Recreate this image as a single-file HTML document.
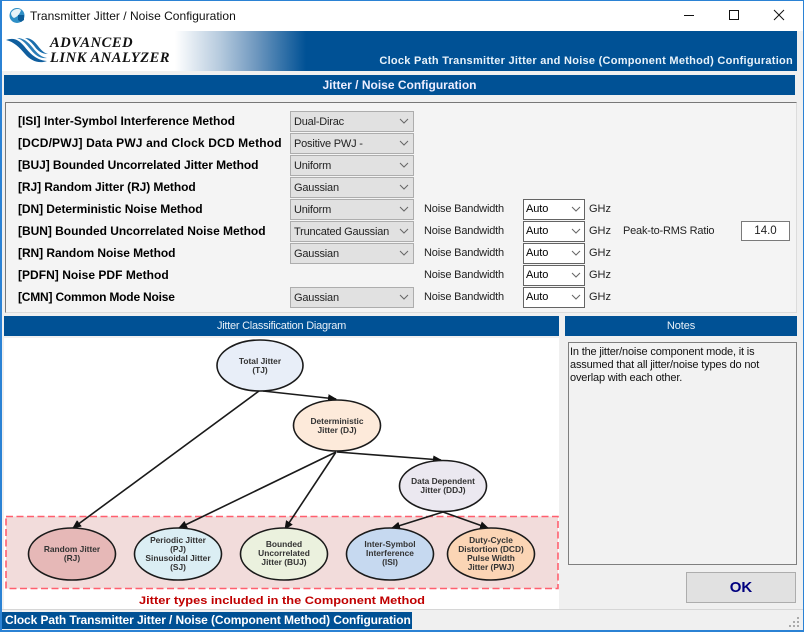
<!DOCTYPE html>
<html><head><meta charset="utf-8"><title>Transmitter Jitter / Noise Configuration</title>
<style>
html,body{margin:0;padding:0;width:804px;height:632px;overflow:hidden;background:#f0f0f0}
*{box-sizing:border-box}
#w{position:relative;width:804px;height:632px;background:#f0f0f0;font-family:"Liberation Sans",sans-serif;font-size:12px;color:#000;overflow:hidden}
#w div{position:absolute;white-space:nowrap}
.b{background:#005195}
.h{color:#fff;text-align:center;height:20px;line-height:21px}
.l{left:18px;font-weight:bold;font-size:12px;line-height:16px;height:16px}
.c{left:290px;width:124px;height:21px;background:#e1e1e1;border:1px solid #adadad;line-height:20px;padding-left:3px;font-size:11px;letter-spacing:-.2px;color:#222}
.a{left:523px;width:62px;height:21px;background:#fff;border:1px solid #646464;line-height:19px;padding-left:2px;font-size:11px;letter-spacing:-.1px}
.n{left:424px;font-size:11px;letter-spacing:-.17px;line-height:16px;color:#222}
.g{left:589px;font-size:11px;line-height:16px;color:#222}
</style></head><body><div id="w">
<div style="left:0;top:0;width:804px;height:31px;background:#fff"></div>
<svg style="position:absolute;left:9px;top:7px" width="17" height="17" viewBox="0 0 17 17"><circle cx="8" cy="8.5" r="7.5" fill="#2f8fc6"/><path d="M2 6C4 2 9 1 12 3C11 7 8 10 5 11C3 10 2 8 2 6Z" fill="#e8f3f8"/><path d="M9 8h6v5l-3 2-3-2z" fill="#0b5d99"/></svg>
<div style="left:30px;top:8px;font-size:12px;line-height:16px;color:#111;letter-spacing:.02px">Transmitter Jitter / Noise Configuration</div>
<svg style="position:absolute;left:680px;top:7px" width="110" height="18"><path d="M4 8.5H14" stroke="#111"/><path d="M49.5 3.5h9v9h-9z" fill="none" stroke="#111"/><path d="M94 3l10 10M104 3L94 13" stroke="#111" fill="none"/></svg>

<div style="left:2px;top:31px;width:795px;height:40px;background:linear-gradient(90deg,#fff 0,#fff 173px,#b4c9dd 219px,#6f98bf 254px,#005195 304px,#005195 100%)"></div>
<svg style="position:absolute;left:4px;top:36px" width="46" height="30" viewBox="0 0 46 30"><path d="M2 4C10 1 15 4 20 10C25 16 31 24 43 25C35 28 27 25 21 18C15 11 10 6 2 4Z" fill="#0f5e9e"/><path d="M13 2C20 2 24 6 29 12C33 17 37 21 43 22C36 23 31 19 27 14C22 8 19 4 13 2Z" fill="#2b7eb8"/><path d="M21 2C27 2 30 5 34 10C37 14 40 17 44 18C38 18 34 15 31 11C28 7 25 4 21 2Z" fill="#1a6dab"/></svg>
<div style="left:50px;top:36px;font-family:'Liberation Serif',serif;font-style:italic;font-weight:bold;font-size:14.5px;line-height:15px;color:#111;letter-spacing:.55px">ADVANCED</div>
<div style="left:50px;top:51px;font-family:'Liberation Serif',serif;font-style:italic;font-weight:bold;font-size:14.5px;line-height:15px;color:#111;letter-spacing:.55px">LINK ANALYZER</div>
<div style="right:11px;top:54px;color:#e8f2fa;font-weight:bold;font-size:11px;line-height:14px;letter-spacing:.27px">Clock Path Transmitter Jitter and Noise (Component Method) Configuration</div>

<div class="b h" style="left:4px;top:75px;width:791px;font-weight:bold;color:#eef">Jitter / Noise Configuration</div>

<div style="left:5px;top:102px;width:792px;height:211px;background:#f4f4f4;border:1px solid #dcdcdc;border-top:1px solid #777;border-left:1px solid #777"></div>

<div class="l" style="top:113px;letter-spacing:-.01px">[ISI] Inter-Symbol Interference Method</div>
<div class="l" style="top:135px;letter-spacing:.145px">[DCD/PWJ] Data PWJ and Clock DCD Method</div>
<div class="l" style="top:157px;letter-spacing:-.075px">[BUJ] Bounded Uncorrelated Jitter Method</div>
<div class="l" style="top:179px;letter-spacing:-.08px">[RJ] Random Jitter (RJ) Method</div>
<div class="l" style="top:201px;letter-spacing:-.07px">[DN] Deterministic Noise Method</div>
<div class="l" style="top:223px;letter-spacing:-.03px">[BUN] Bounded Uncorrelated Noise Method</div>
<div class="l" style="top:245px;letter-spacing:-.05px">[RN] Random Noise Method</div>
<div class="l" style="top:267px;letter-spacing:.03px">[PDFN] Noise PDF Method</div>
<div class="l" style="top:289px;letter-spacing:-.2px">[CMN] Common Mode Noise</div>

<div class="c" style="top:111px">Dual-Dirac</div>
<div class="c" style="top:133px">Positive PWJ -</div>
<div class="c" style="top:155px">Uniform</div>
<div class="c" style="top:177px">Gaussian</div>
<div class="c" style="top:199px">Uniform</div>
<div class="c" style="top:221px">Truncated Gaussian</div>
<div class="c" style="top:243px">Gaussian</div>
<div class="c" style="top:287px">Gaussian</div>

<div class="n" style="top:201px">Noise Bandwidth</div>
<div class="n" style="top:223px">Noise Bandwidth</div>
<div class="n" style="top:245px">Noise Bandwidth</div>
<div class="n" style="top:267px">Noise Bandwidth</div>
<div class="n" style="top:289px">Noise Bandwidth</div>
<div class="a" style="top:199px">Auto</div>
<div class="a" style="top:221px">Auto</div>
<div class="a" style="top:243px">Auto</div>
<div class="a" style="top:265px">Auto</div>
<div class="a" style="top:287px">Auto</div>
<div class="g" style="top:201px">GHz</div>
<div class="g" style="top:223px">GHz</div>
<div class="g" style="top:245px">GHz</div>
<div class="g" style="top:267px">GHz</div>
<div class="g" style="top:289px">GHz</div>
<div class="n" style="left:623px;top:223px;letter-spacing:-.2px">Peak-to-RMS Ratio</div>
<div style="left:741px;top:221px;width:49px;height:20px;background:#fff;border:1px solid #7a7a7a;text-align:center;line-height:18px;font-size:11.5px;color:#222">14.0</div>

<svg style="position:absolute;left:0;top:0" width="804" height="320" fill="none" stroke="#666" stroke-width="1">
<path d="M400 119l4 4 4-4M400 141l4 4 4-4M400 163l4 4 4-4M400 185l4 4 4-4M400 207l4 4 4-4M400 229l4 4 4-4M400 251l4 4 4-4M400 295l4 4 4-4"/>
<path d="M572 207l4 4 4-4M572 229l4 4 4-4M572 251l4 4 4-4M572 273l4 4 4-4M572 295l4 4 4-4"/>
</svg>

<div class="b h" style="left:4px;top:316px;width:555px;font-size:11px;letter-spacing:-.25px;color:#e8f0f8">Jitter Classification Diagram</div>
<div class="b h" style="left:565px;top:316px;width:232px;font-size:11px;letter-spacing:-.1px;color:#e8f0f8">Notes</div>

<div style="left:4px;top:338px;width:555px;height:271px;background:#fff"></div>
<svg style="position:absolute;left:0;top:0;filter:blur(.3px)" width="804" height="632" font-family="Liberation Sans,sans-serif" font-weight="bold" font-size="8.4" text-anchor="middle" fill="#333">
<defs><marker id="m" markerUnits="userSpaceOnUse" markerWidth="9" markerHeight="8" refX="8" refY="4" orient="auto"><path d="M0 0L9 4L0 8z" fill="#111" stroke="none"/></marker></defs>
<rect x="6" y="516.5" width="552" height="72" fill="#f2dcdb" stroke="#ff5f6e" stroke-width="1.6" stroke-dasharray="7 3.5"/>
<g stroke="#1a1a1a" stroke-width="1.6" fill="none">
<path d="M259 391L73 528" marker-end="url(#m)"/>
<path d="M263 391L336 399" marker-end="url(#m)"/>
<path d="M337 452L441 460" marker-end="url(#m)"/>
<path d="M336 452L179 528" marker-end="url(#m)"/>
<path d="M336 452L285 529" marker-end="url(#m)"/>
<path d="M443 512L392 528" marker-end="url(#m)"/>
<path d="M443 512L488 528" marker-end="url(#m)"/>
</g>
<g stroke="#1a1a1a" stroke-width="1.6">
<ellipse cx="260" cy="365.5" rx="43" ry="25.5" fill="#e8eef8"/>
<ellipse cx="337" cy="425.5" rx="43.5" ry="25.5" fill="#fdeada"/>
<ellipse cx="443" cy="486" rx="43.5" ry="25.5" fill="#ebe8f0"/>
<ellipse cx="72" cy="554" rx="43.5" ry="26" fill="#e6b8b7"/>
<ellipse cx="178" cy="554" rx="43.5" ry="26" fill="#dbeef4"/>
<ellipse cx="284" cy="554" rx="43.5" ry="26" fill="#ebf1de"/>
<ellipse cx="390" cy="554" rx="43.5" ry="26" fill="#c6d9f0"/>
<ellipse cx="491" cy="554" rx="43.5" ry="26" fill="#fbd5b5"/>
</g>
<text x="260" y="364">Total Jitter</text><text x="260" y="373">(TJ)</text>
<text x="337" y="424">Deterministic</text><text x="337" y="433">Jitter (DJ)</text>
<text x="443" y="484">Data Dependent</text><text x="443" y="493">Jitter (DDJ)</text>
<text x="72" y="552">Random Jitter</text><text x="72" y="561">(RJ)</text>
<text x="178" y="543">Periodic Jitter</text><text x="178" y="552">(PJ)</text><text x="178" y="561">Sinusoidal Jitter</text><text x="178" y="570">(SJ)</text>
<text x="284" y="547">Bounded</text><text x="284" y="556">Uncorrelated</text><text x="284" y="565">Jitter (BUJ)</text>
<text x="390" y="547">Inter-Symbol</text><text x="390" y="556">Interference</text><text x="390" y="565">(ISI)</text>
<text x="491" y="543">Duty-Cycle</text><text x="491" y="552">Distortion (DCD)</text><text x="491" y="561">Pulse Width</text><text x="491" y="570">Jitter (PWJ)</text>
<text x="282" y="604" font-size="11" fill="#c00000" textLength="286" lengthAdjust="spacingAndGlyphs">Jitter types included in the Component Method</text>
</svg>

<div style="left:568px;top:342px;width:229px;height:223px;background:#f2f2f2;border:1px solid #7f7f7f"></div>
<div style="left:570px;top:346px;font-size:11px;letter-spacing:-.17px;line-height:13px;color:#111">In the jitter/noise component mode, it is<br>assumed that all jitter/noise types do not<br>overlap with each other.</div>

<div style="left:686px;top:572px;width:110px;height:31px;background:#e1e1e1;border:1px solid #adadad;text-align:center;line-height:30px;font-weight:bold;font-size:15px;color:#00007f">OK</div>

<div style="left:0;top:609px;width:804px;height:1px;background:#d6d6d6"></div>
<div class="b" style="left:2px;top:612px;width:410px;height:17px;color:#fff;font-weight:bold;font-size:12px;line-height:17px;padding-left:3px;letter-spacing:-.09px;overflow:hidden">Clock Path Transmitter Jitter / Noise (Component Method) Configuration</div>
<svg style="position:absolute;left:788px;top:616px" width="14" height="14" fill="#aaa"><rect x="9" y="1" width="2" height="2"/><rect x="5" y="5" width="2" height="2"/><rect x="9" y="5" width="2" height="2"/><rect x="1" y="9" width="2" height="2"/><rect x="5" y="9" width="2" height="2"/><rect x="9" y="9" width="2" height="2"/></svg>

<div style="left:0;top:0;width:804px;height:632px;border:1px solid #2b82d4;border-width:1px 1px 2px 2px"></div>
</div></body></html>
